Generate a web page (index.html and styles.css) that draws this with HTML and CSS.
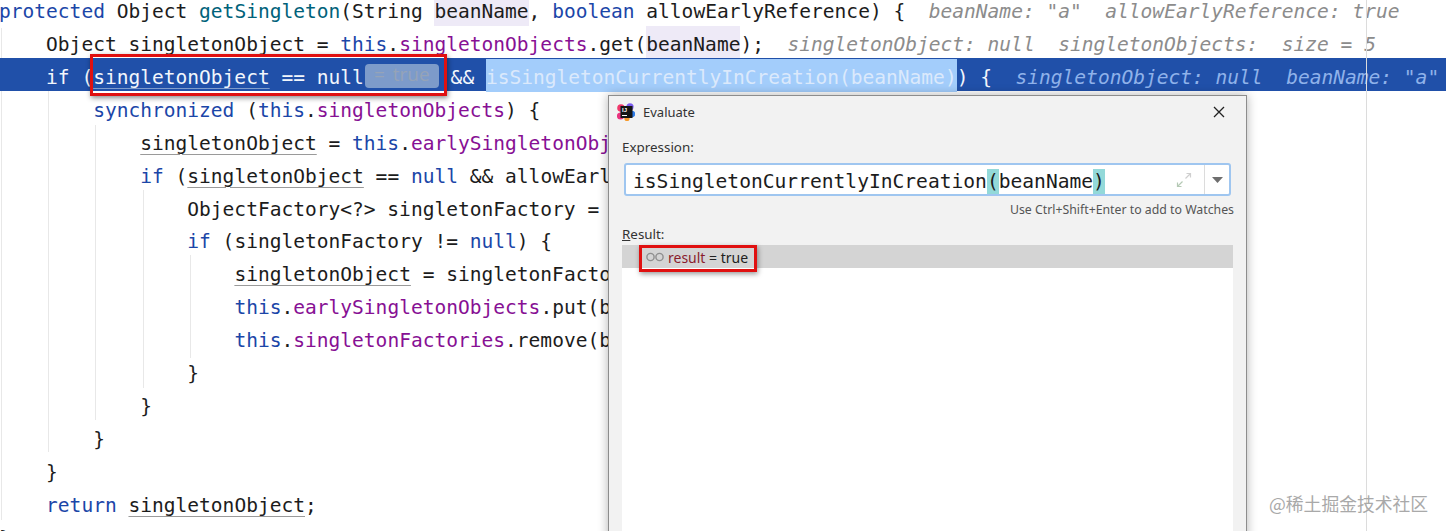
FILE: index.html
```html
<!DOCTYPE html>
<html lang="en">
<head>
<meta charset="utf-8">
<title>Evaluate</title>
<link rel="stylesheet" href="styles.css">
</head>
<body>
<main class="editor">
  <div class="code">
    <div class="line"><span class="kw">protected</span> Object <span class="fn">getSingleton</span>(String <span class="ref">beanName</span>, <span class="kw">boolean</span> allowEarlyReference) {  <span class="hint">beanName: "a"  allowEarlyReference: true</span></div>
    <div class="line">    Object singletonObject = <span class="kw">this</span>.<span class="field">singletonObjects</span>.get(<span class="ref">beanName</span>);  <span class="hint">singletonObject: null  singletonObjects:  size = 5</span></div>
    <div class="line current">    if (<span class="ul-light">singletonObject</span> == null<span class="inlay">= true</span> &amp;&amp; <span class="sel">isSingletonCurrentlyInCreation(beanName)</span>) {  <span class="hint">singletonObject: null  beanName: "a"</span></div>
    <div class="line">        <span class="kw">synchronized</span> (<span class="kw">this</span>.<span class="field">singletonObjects</span>) {</div>
    <div class="line">            <span class="ul">singletonObject</span> = <span class="kw">this</span>.<span class="field">earlySingletonObjects</span>.get(beanName);</div>
    <div class="line">            <span class="kw">if</span> (<span class="ul">singletonObject</span> == <span class="kw">null</span> &amp;&amp; allowEarlyReference) {</div>
    <div class="line">                ObjectFactory&lt;?&gt; singletonFactory = <span class="kw">this</span>.<span class="field">singletonFactories</span>.get(beanName);</div>
    <div class="line">                <span class="kw">if</span> (singletonFactory != <span class="kw">null</span>) {</div>
    <div class="line">                    <span class="ul">singletonObject</span> = singletonFactory.getObject();</div>
    <div class="line">                    <span class="kw">this</span>.<span class="field">earlySingletonObjects</span>.put(beanName, singletonObject);</div>
    <div class="line">                    <span class="kw">this</span>.<span class="field">singletonFactories</span>.remove(beanName);</div>
    <div class="line">                }</div>
    <div class="line">            }</div>
    <div class="line">        }</div>
    <div class="line">    }</div>
    <div class="line">    <span class="kw">return</span> <span class="ul">singletonObject</span>;</div>
    <div class="line">}</div>
    <i class="guide g0"></i>
    <i class="guide g1"></i>
    <i class="guide g2"></i>
    <i class="guide g3"></i>
    <i class="guide g4"></i>
  </div>
  <i class="margin-line"></i>
  <div class="mark-box"></div>

  <section class="dialog">
    <header class="title">
      <svg class="logo" width="18" height="18" viewBox="0 0 18 18" aria-hidden="true">
        <circle cx="4" cy="5" r="3.8" fill="#f0386b"/>
        <circle cx="3.5" cy="13" r="3.6" fill="#e9337f"/>
        <circle cx="13" cy="3.8" r="3.6" fill="#7a5cf0"/>
        <circle cx="15" cy="11" r="3.2" fill="#2f7de8"/>
        <circle cx="10" cy="15.4" r="2.6" fill="#f79a2c"/>
        <rect x="3.5" y="3" width="12" height="12" fill="#151515"/>
        <text x="5" y="9.4" class="logo-text">IJ</text>
        <rect x="5" y="12" width="5" height="1" fill="#fff"/>
      </svg>
      <span class="title-text">Evaluate</span>
      <svg class="close" width="12" height="12" viewBox="0 0 12 12" aria-hidden="true">
        <path d="M1 1 L11 11 M11 1 L1 11" stroke="#222" stroke-width="1.3" fill="none"/>
      </svg>
    </header>
    <div class="body">
      <div class="label">Expression:</div>
      <div class="input">
        <span class="expr">isSingletonCurrentlyInCreation<span class="brace">(</span>beanName<span class="brace">)</span></span>
        <svg class="expand" width="16" height="16" viewBox="0 0 16 16" aria-hidden="true">
          <path d="M9.5 6.5 L14.5 1.5 M10.5 1.5 H14.5 V5.5" stroke="#cfcfcf" stroke-width="1.2" fill="none"/>
          <path d="M6.5 9.5 L1.5 14.5 M1.5 10.5 V14.5 H5.5" stroke="#b5c9b5" stroke-width="1.2" fill="none"/>
        </svg>
        <span class="drop"><svg width="11" height="6" viewBox="0 0 11 6" aria-hidden="true"><path d="M0 0 H11 L5.5 6 Z" fill="#6e6e6e"/></svg></span>
      </div>
      <div class="tip">Use Ctrl+Shift+Enter to add to Watches</div>
      <div class="label result-label"><u>R</u>esult:</div>
      <div class="list">
        <div class="row">
          <span class="item">
            <svg width="18" height="10" viewBox="0 0 18 10" aria-hidden="true">
              <circle cx="4.5" cy="5" r="3.6" fill="none" stroke="#8f8f8f" stroke-width="1.4"/>
              <circle cx="13.5" cy="5" r="3.6" fill="none" stroke="#8f8f8f" stroke-width="1.4"/>
            </svg>
            <span class="var">result</span><span class="val"> = true</span>
          </span>
        </div>
      </div>
    </div>
  </section>

  <div class="watermark">@稀土掘金技术社区</div>
</main>
</body>
</html>
```

FILE: styles.css
```css
* { box-sizing: border-box; }

html, body {
  margin: 0;
  padding: 0;
  background: #fff;
}

.editor {
  position: relative;
  width: 1446px;
  height: 531px;
  overflow: hidden;
  background: #fff;
}

.code {
  position: relative;
  margin-top: -8px;
  font-family: "DejaVu Sans Mono", "Liberation Mono", monospace;
  font-size: 19.56px;
  color: #1c1c1c;
}

.line {
  height: 32.93px;
  padding-left: 0;
  line-height: 40.6px;
  white-space: pre;
  text-indent: -1px;
}

.kw { color: #1b46a8; }
.fn { color: #00627a; }
.field { color: #871094; }

.ref {
  background: #eeeaf7;
  padding: 7px 0 3.4px;
}

.hint {
  color: #8c8c8c;
  font-style: italic;
}

.ul {
  text-decoration: underline;
  text-decoration-color: #9a9a9a;
  text-underline-offset: 4px;
  text-decoration-thickness: 1px;
}

.current {
  position: relative;
  z-index: 1;
  background: #2050a9;
  color: #f2f6fc;
}

.current .hint { color: #8fb2ea; }

.ul-light {
  text-decoration: underline;
  text-decoration-color: #7f9ccc;
  text-underline-offset: 4px;
  text-decoration-thickness: 1px;
}

.inlay {
  display: inline-block;
  width: 74px;
  height: 24px;
  margin-left: 1px;
  border-radius: 4px;
  background: #7d9bca;
  color: #95a3b8;
  font-family: "Open Sans", "Liberation Sans", sans-serif;
  font-size: 19px;
  line-height: 21px;
  text-align: center;
  text-indent: 0;
  word-spacing: 3px;
  vertical-align: 3px;
}

.sel {
  background: #a3cdfb;
  color: #dbe9fb;
  padding: 7px 0 3.4px;
}

.guide {
  position: absolute;
  width: 1px;
  background: #e8e8e8;
}

.g0 { left: 1px; top: 36px; height: 492px; }
.g1 { left: 48px; top: 99px; height: 361px; }
.g2 { left: 95px; top: 133px; height: 295px; }
.g3 { left: 143px; top: 198px; height: 198px; }
.g4 { left: 190px; top: 263px; height: 103px; }

.margin-line {
  position: absolute;
  left: 1366px;
  top: 0;
  bottom: 0;
  z-index: 2;
  width: 1px;
  background: #dcdcdc;
}

.mark-box {
  position: absolute;
  left: 90px;
  top: 54px;
  z-index: 3;
  width: 357px;
  height: 42px;
  border: 3px solid #e01010;
  box-shadow: 1px 2px 5px rgba(0, 0, 0, 0.45);
}

.dialog {
  position: absolute;
  left: 608px;
  top: 95px;
  z-index: 4;
  display: flex;
  flex-direction: column;
  width: 639px;
  height: 460px;
  border: 1px solid #8d8d8d;
  background: #f2f2f2;
  font-family: "Noto Sans", "Open Sans", sans-serif;
  color: #333;
  box-shadow: 0 0 10px rgba(0, 0, 0, 0.3);
}

.title {
  display: flex;
  align-items: center;
  flex: none;
  height: 34px;
  padding: 0 21px 2px 8px;
}

.logo { flex: none; }

.logo-text {
  font-family: "Liberation Sans", sans-serif;
  font-size: 6px;
  font-weight: 700;
  fill: #fff;
}

.title-text {
  margin-left: 8px;
  font-size: 13px;
}

.close {
  flex: none;
  margin-left: auto;
}

.body {
  display: flex;
  flex: 1;
  flex-direction: column;
  padding: 0 13px;
}

.label {
  margin-top: 8px;
  font-size: 13.4px;
  line-height: 18px;
}

.input {
  display: flex;
  align-items: center;
  flex: none;
  height: 33px;
  margin: 7px 2px 0;
  border: 2px solid #9fc6f0;
  border-radius: 3px;
  background: #fff;
}

.expr {
  padding: 5px 0 0 7px;
  font-family: "DejaVu Sans Mono", "Liberation Mono", monospace;
  font-size: 19.6px;
  line-height: 26px;
  color: #1c1c1c;
  white-space: pre;
}

.brace {
  padding: 1px 0 1px;
  background: #93d9d9;
}

.expand {
  flex: none;
  margin-left: auto;
  margin-right: 12px;
}

.drop {
  display: flex;
  align-items: center;
  justify-content: center;
  flex: none;
  width: 25px;
  height: 100%;
  border-left: 1px solid #dcdcdc;
}

.tip {
  margin: 5px -1px 0 0;
  font-size: 12.3px;
  line-height: 18px;
  text-align: right;
  color: #555;
}

.result-label { margin-top: 6px; }

.list {
  flex: 1;
  margin-top: 2px;
  background: #fff;
}

.row {
  height: 23px;
  padding-left: 17px;
  background: #d4d4d4;
}

.item {
  display: inline-flex;
  align-items: center;
  height: 27px;
  margin-top: -1px;
  padding: 0 6px 2px 4px;
  border: 3px solid #e01010;
  box-shadow: 1px 2px 5px rgba(0, 0, 0, 0.4);
  font-size: 14px;
  white-space: pre;
}

.item svg {
  flex: none;
  margin-right: 4px;
}

.var { color: #8a1c2c; }
.val { color: #222; }

.watermark {
  position: absolute;
  left: 1269px;
  top: 492px;
  z-index: 5;
  font-family: "Noto Sans CJK SC", sans-serif;
  font-size: 17.8px;
  line-height: 22px;
  white-space: nowrap;
  color: #a9a9a9;
}
```
